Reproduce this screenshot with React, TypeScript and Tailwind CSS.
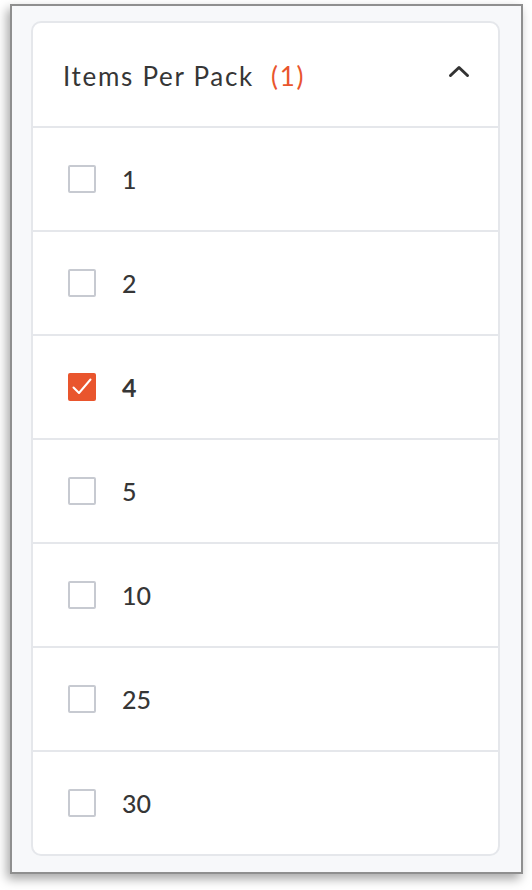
import { useState } from "react";

const options = ["1", "2", "4", "5", "10", "25", "30"];

function Checkbox({ checked }: { checked: boolean }) {
  if (checked) {
    return (
      <span className="flex h-[28px] w-[28px] shrink-0 items-center justify-center rounded-[2px] bg-[#e9552d]">
        <svg width="28" height="28" viewBox="0 0 28 28" fill="none">
          <path d="M5.5 14.5 L11 20 L22.5 6.5" stroke="#fff" strokeWidth="2" strokeLinecap="round" strokeLinejoin="round" />
        </svg>
      </span>
    );
  }
  return <span className="h-[28px] w-[28px] shrink-0 rounded-[2px] border-2 border-[#c7cad1] bg-white" />;
}

export default function App() {
  const [selected, setSelected] = useState<string[]>(["4"]);
  const [open, setOpen] = useState(true);

  const toggle = (v: string) =>
    setSelected((s) => (s.includes(v) ? s.filter((x) => x !== v) : [...s, v]));

  return (
    <div className="h-[890px] w-[532px] bg-white pl-[10px] pt-[4px] font-['Lato','Noto_Sans',sans-serif] text-[#363636]">
      <div className="h-[870px] w-[513px] border-[2.5px] border-[#8f8f8f] bg-[#f7f8fa] pl-[19px] pt-[15px] shadow-[-3px_5px_10px_rgba(0,0,0,0.35)]">
        <div className="w-[469px] overflow-hidden rounded-[10px] border-2 border-[#e5e7eb] bg-white">
          <button
            type="button"
            onClick={() => setOpen(!open)}
            className="flex h-[103px] w-full items-center justify-between pl-[30px] pr-[28px]"
          >
            <span className="translate-y-[1px] text-[26px] leading-none tracking-[1.7px]">
              Items Per Pack
              {selected.length > 0 && <span className="ml-[17px] text-[#e9552d]">({selected.length})</span>}
            </span>
            <svg width="22" height="14" viewBox="0 0 22 14" fill="none" className={"-translate-y-[4px] " + (open ? "" : "rotate-180")}>
              <path d="M2.5 11.5 L11 3.5 L19.5 11.5" stroke="#333" strokeWidth="3" strokeLinecap="round" strokeLinejoin="round" />
            </svg>
          </button>
          {open &&
            options.map((o) => {
              const checked = selected.includes(o);
              return (
                <label
                  key={o}
                  onClick={() => toggle(o)}
                  className="flex h-[104px] cursor-pointer items-center gap-[26px] border-t-2 border-[#e5e7eb] pl-[35px]"
                >
                  <Checkbox checked={checked} />
                  <span className={"text-[25px] leading-none " + (checked ? "font-bold" : "font-medium")}>{o}</span>
                </label>
              );
            })}
        </div>
      </div>
    </div>
  );
}
